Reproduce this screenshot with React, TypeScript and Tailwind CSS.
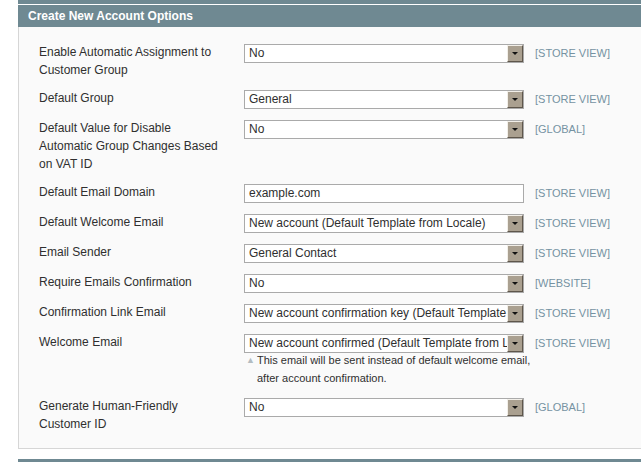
import React from "react";

type Row = {
  label: string[];
  kind: "select" | "input";
  value: string;
  scope: string;
  note?: string[];
};

const rows: Row[] = [
  { label: ["Enable Automatic Assignment to", "Customer Group"], kind: "select", value: "No", scope: "[STORE VIEW]" },
  { label: ["Default Group"], kind: "select", value: "General", scope: "[STORE VIEW]" },
  {
    label: ["Default Value for Disable", "Automatic Group Changes Based", "on VAT ID"],
    kind: "select",
    value: "No",
    scope: "[GLOBAL]",
  },
  { label: ["Default Email Domain"], kind: "input", value: "example.com", scope: "[STORE VIEW]" },
  { label: ["Default Welcome Email"], kind: "select", value: "New account (Default Template from Locale)", scope: "[STORE VIEW]" },
  { label: ["Email Sender"], kind: "select", value: "General Contact", scope: "[STORE VIEW]" },
  { label: ["Require Emails Confirmation"], kind: "select", value: "No", scope: "[WEBSITE]" },
  { label: ["Confirmation Link Email"], kind: "select", value: "New account confirmation key (Default Template from Locale)", scope: "[STORE VIEW]" },
  {
    label: ["Welcome Email"],
    kind: "select",
    value: "New account confirmed (Default Template from Locale)",
    scope: "[STORE VIEW]",
    note: ["This email will be sent instead of default welcome email,", "after account confirmation."],
  },
  { label: ["Generate Human-Friendly", "Customer ID"], kind: "select", value: "No", scope: "[GLOBAL]" },
];

function FakeSelect({ value }: { value: string }) {
  return (
    <div className="relative mt-[1px] h-[19px] w-[280px] overflow-hidden border border-[#aaaaaa] bg-white">
      <div className="overflow-hidden whitespace-nowrap pl-[4px] pr-[16px] text-[12px] leading-[17px] text-[#2f2f2f]">{value}</div>
      <div className="absolute right-0 top-0 flex h-[17px] w-[16px] items-center justify-center border-b border-l border-r border-t border-b-[#5e564b] border-l-[#f2efe9] border-r-[#5e564b] border-t-[#f2efe9] bg-[#aaa090]">
        <div className="h-0 w-0 border-l-[3px] border-r-[3px] border-t-[3px] border-l-transparent border-r-transparent border-t-[#111]" />
      </div>
    </div>
  );
}

function FakeInput({ value }: { value: string }) {
  return (
    <div className="mt-[1px] h-[19px] w-[280px] border border-[#aaaaaa] bg-white pl-[4px] text-[12px] leading-[17px] text-[#2f2f2f]">
      {value}
    </div>
  );
}

export default function App() {
  return (
    <div className="h-[462px] w-[641px] overflow-hidden bg-white font-['Liberation_Sans',Arial,sans-serif]">
      <div className="w-[700px] pl-[18px]">
        <div className="h-[4px] bg-[#6f8992]" />
        <div className="mt-[1px] flex h-[22px] items-center bg-[#6f8992] pl-[10px] text-[12px] font-bold text-white">
          Create New Account Options
        </div>
        <div className="border-b border-l border-[#d6d6d6] bg-[#fafafa] pb-[10px] pl-[20px] pt-[11px]">
          {rows.map((r) => (
            <div key={r.label.join(" ")} className="grid grid-cols-[205px_280px_auto] py-[5px]">
              <div className="text-[12px] leading-[18px] text-[#2f2f2f]">
                {r.label.map((l) => (
                  <div key={l} className="whitespace-nowrap">{l}</div>
                ))}
              </div>
              <div>
                {r.kind === "select" ? <FakeSelect value={r.value} /> : <FakeInput value={r.value} />}
                {r.note && (
                  <div className="mt-[-2px] flex whitespace-nowrap pl-[2px] text-[11px] leading-[18px] text-[#2f2f2f]">
                    <span className="w-[11px] shrink-0 text-[9px] text-[#b3bcc1]">▲</span>
                    <div>
                      <div>{r.note[0]}</div>
                      <div>{r.note[1]}</div>
                    </div>
                  </div>
                )}
              </div>
              <div className="pl-[11px] pt-[1px] text-[11px] leading-[18px] text-[#7592a2]">{r.scope}</div>
            </div>
          ))}
        </div>
        <div className="mt-[10px] h-[10px] bg-[#6f8992]" />
      </div>
    </div>
  );
}
